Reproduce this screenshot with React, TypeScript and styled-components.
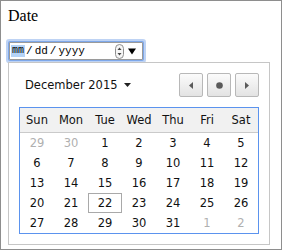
import * as React from "react"
import styled, { createGlobalStyle } from "styled-components"

const GlobalStyle = createGlobalStyle`
  html, body {
    margin: 0;
    padding: 0;
    background: #ffffff;
  }
`

const Frame = styled.div`
  box-sizing: border-box;
  width: 282px;
  height: 250px;
  border: 1px solid #8e8e8e;
  display: flex;
  flex-direction: column;
  align-items: flex-start;
`

const Label = styled.div`
  padding: 6px 0 0 7px;
  height: 18px;
  line-height: 18px;
  font-family: "Liberation Serif", "Times New Roman", serif;
  font-size: 16px;
  color: #000;
`

const DateField = styled.div`
  box-sizing: border-box;
  margin: 17px 0 0 8px;
  width: 134px;
  height: 18px;
  border: 1px solid #9a9a9a;
  background: #fff;
  box-shadow: 0 0 0 1px #7ea8ea, 0 0 0 3px rgba(126, 168, 234, 0.5);
  border-radius: 1px;
  display: flex;
  align-items: center;
  padding-left: 1px;
  font-family: "Liberation Mono", "Courier New", monospace;
  font-size: 11px;
  color: #000;
`

const Segment = styled.span<{ $active?: boolean }>`
  padding: 0 1px;
  line-height: 12px;
  font-size: ${({ $active }) => ($active ? "10px" : "11px")};
  background: ${({ $active }) => ($active ? "#b4d3f7" : "transparent")};
`

const Separator = styled.span`
  margin: 0 1px;
  line-height: 12px;
`

const Spinner = styled.svg`
  margin-left: auto;
  display: block;
`

const DropArrow = styled.svg`
  margin: 0 6px 0 4px;
  display: block;
`

const Popup = styled.div`
  box-sizing: border-box;
  margin: 2px 0 0 7px;
  width: 262px;
  height: 183px;
  border: 1px solid #c6c6c6;
  background: #fff;
  padding: 10px;
  display: flex;
  flex-direction: column;
  gap: 10px;
  font-family: "DejaVu Sans", Verdana, sans-serif;
  font-size: 11.5px;
  color: #1e1e1e;
`

const PopupHeader = styled.div`
  height: 24px;
  display: flex;
  align-items: center;
`

const MonthLabel = styled.div`
  padding-left: 6px;
  display: flex;
  align-items: center;
  gap: 6px;
  color: #111;
`

const NavGroup = styled.div`
  margin-left: auto;
  display: flex;
  gap: 4px;
`

const NavButton = styled.div`
  box-sizing: border-box;
  width: 24px;
  height: 24px;
  border: 1px solid #b8b8b8;
  border-radius: 2px;
  background: linear-gradient(#fbfbfb, #e3e3e3);
  display: flex;
  align-items: center;
  justify-content: center;
`

const Calendar = styled.div`
  border: 1px solid #5b93ee;
  display: grid;
  grid-template-columns: repeat(7, 34px);
`

const HeadCell = styled.div`
  height: 24px;
  background: #f1f1f1;
  border-bottom: 1px solid #cacaca;
  display: flex;
  align-items: center;
  justify-content: center;
  color: #111;
`

const DayCell = styled.div<{ $muted?: boolean; $today?: boolean }>`
  height: 20px;
  display: flex;
  align-items: center;
  justify-content: center;
  color: ${({ $muted }) => ($muted ? "#b0b0b0" : "#111")};
  box-shadow: ${({ $today }) => ($today ? "inset 0 0 0 1px #a9a9a9" : "none")};
`

const weekdays = ["Sun", "Mon", "Tue", "Wed", "Thu", "Fri", "Sat"]

const days: { n: number; muted?: boolean }[] = [
  { n: 29, muted: true },
  { n: 30, muted: true },
  ...Array.from({ length: 31 }, (_, i) => ({ n: i + 1 })),
  { n: 1, muted: true },
  { n: 2, muted: true },
]

export default function App() {
  return (
    <>
      <GlobalStyle />
      <Frame>
        <Label>Date</Label>
        <DateField>
          <Segment $active>mm</Segment>
          <Separator>/</Separator>
          <Segment>dd</Segment>
          <Separator>/</Separator>
          <Segment>yyyy</Segment>
          <Spinner width="9" height="15" viewBox="0 0 9 15">
            <rect x="0.5" y="0.5" width="8" height="14" rx="4" fill="#f6f6f6" stroke="#8f8f8f" />
            <path d="M2.5 6 L4.5 3.5 L6.5 6 Z" fill="#444" />
            <path d="M2.5 9 L4.5 11.5 L6.5 9 Z" fill="#444" />
          </Spinner>
          <DropArrow width="8" height="7" viewBox="0 0 8 7">
            <path d="M0 0.5 H8 L4 6.5 Z" fill="#000" />
          </DropArrow>
        </DateField>
        <Popup>
          <PopupHeader>
            <MonthLabel>
              December 2015
              <svg width="7" height="4" viewBox="0 0 7 4">
                <path d="M0 0 H7 L3.5 4 Z" fill="#222" />
              </svg>
            </MonthLabel>
            <NavGroup>
              <NavButton>
                <svg width="4" height="7" viewBox="0 0 4 7">
                  <path d="M4 0 V7 L0 3.5 Z" fill="#5a5a5a" />
                </svg>
              </NavButton>
              <NavButton>
                <svg width="7" height="7" viewBox="0 0 7 7">
                  <circle cx="3.5" cy="3.5" r="3.3" fill="#5a5a5a" />
                </svg>
              </NavButton>
              <NavButton>
                <svg width="4" height="7" viewBox="0 0 4 7">
                  <path d="M0 0 V7 L4 3.5 Z" fill="#5a5a5a" />
                </svg>
              </NavButton>
            </NavGroup>
          </PopupHeader>
          <Calendar>
            {weekdays.map((d) => (
              <HeadCell key={d}>{d}</HeadCell>
            ))}
            {days.map((d, i) => (
              <DayCell key={i} $muted={d.muted} $today={!d.muted && d.n === 22}>
                {d.n}
              </DayCell>
            ))}
          </Calendar>
        </Popup>
      </Frame>
    </>
  )
}
